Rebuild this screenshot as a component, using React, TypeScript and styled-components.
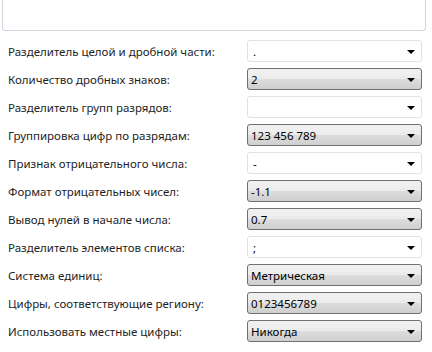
import React from 'react';
import styled, { createGlobalStyle } from 'styled-components';

const GlobalStyle = createGlobalStyle`
  html, body {
    margin: 0;
    padding: 0;
    background: #ffffff;
  }
  body {
    font-family: "Noto Sans", "Open Sans", sans-serif;
    font-size: 11.5px;
    color: #1e1e1e;
  }
`;

const Page = styled.div`
  width: 432px;
  height: 352px;
  overflow: hidden;
`;

const Preview = styled.div`
  height: 30px;
  margin: 0 6px 0 2px;
  border: 1px solid #cfd6de;
  border-top: none;
  border-radius: 0 0 3px 3px;
`;

const Settings = styled.div`
  display: flex;
  flex-direction: column;
  padding: 6px 10px 0 8px;
`;

const Row = styled.div`
  display: grid;
  grid-template-columns: 239px 175px;
  align-items: center;
  height: 28px;
`;

const Label = styled.span`
  white-space: nowrap;
`;

const Combo = styled.div<{ $editable?: boolean }>`
  display: flex;
  align-items: center;
  justify-content: space-between;
  box-sizing: border-box;
  height: 22px;
  padding: 0 6px 0 ${(p) => (p.$editable ? '5px' : '3px')};
  border-radius: 3px;
  border: 1px solid ${(p) => (p.$editable ? '#dde3ea' : '#707070')};
  background: ${(p) =>
    p.$editable ? '#ffffff' : 'linear-gradient(to bottom, #f2f2f2 0%, #ebebeb 50%, #dddddd 51%, #cfcfcf 100%)'};
  color: #000;
`;

const Value = styled.span`
  white-space: nowrap;
`;

const Arrow = styled.span`
  width: 0;
  height: 0;
  border-left: 4px solid transparent;
  border-right: 4px solid transparent;
  border-top: 4px solid #000;
  margin-top: 1px;
`;

const rows: { label: string; value: string; editable?: boolean }[] = [
  { label: 'Разделитель целой и дробной части:', value: '.', editable: true },
  { label: 'Количество дробных знаков:', value: '2' },
  { label: 'Разделитель групп разрядов:', value: '', editable: true },
  { label: 'Группировка цифр по разрядам:', value: '123 456 789' },
  { label: 'Признак отрицательного числа:', value: '-', editable: true },
  { label: 'Формат отрицательных чисел:', value: '-1.1' },
  { label: 'Вывод нулей в начале числа:', value: '0.7' },
  { label: 'Разделитель элементов списка:', value: ';', editable: true },
  { label: 'Система единиц:', value: 'Метрическая' },
  { label: 'Цифры, соответствующие региону:', value: '0123456789' },
  { label: 'Использовать местные цифры:', value: 'Никогда' },
];

export default function App() {
  return (
    <Page>
      <GlobalStyle />
      <Preview />
      <Settings>
        {rows.map((r) => (
          <Row key={r.label}>
            <Label>{r.label}</Label>
            <Combo $editable={r.editable}>
              <Value>{r.value}</Value>
              <Arrow />
            </Combo>
          </Row>
        ))}
      </Settings>
    </Page>
  );
}
